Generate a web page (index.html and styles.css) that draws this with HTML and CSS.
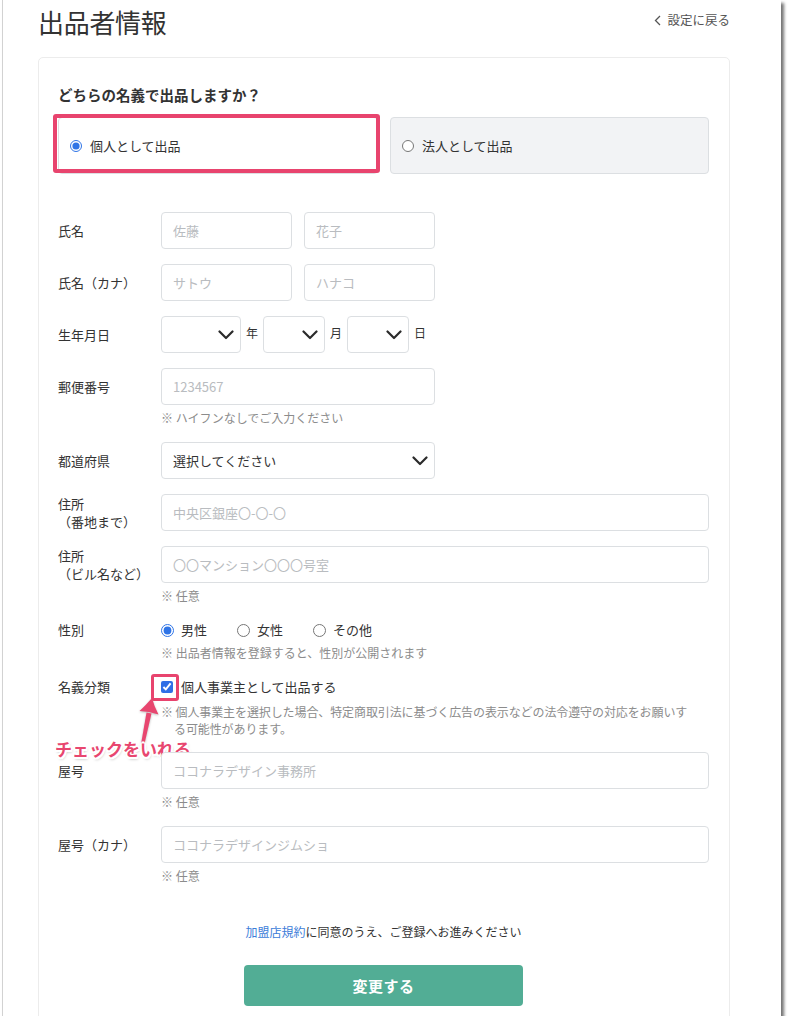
FILE: index.html
```html
<!DOCTYPE html>
<html lang="ja">
<head>
<meta charset="utf-8">
<title>出品者情報</title>
<link rel="stylesheet" href="styles.css">
</head>
<body>
<div class="frame">
  <header class="top">
    <h1 class="title">出品者情報</h1>
    <a class="back" href="#"><svg class="back-ico" width="7" height="11" viewBox="0 0 7 11"><polyline points="6,1 1.5,5.5 6,10" fill="none" stroke="#555" stroke-width="1.3"/></svg>設定に戻る</a>
  </header>

  <section class="card">
    <h2 class="q">どちらの名義で出品しますか？</h2>
    <div class="options">
      <label class="opt opt-on"><input type="radio" name="type" checked>個人として出品<span class="hl hl-opt"></span></label>
      <label class="opt opt-off"><input type="radio" name="type">法人として出品</label>
    </div>

    <div class="form">
      <div class="row">
        <div class="lbl">氏名</div>
        <div class="fld pair">
          <input class="inp w131" placeholder="佐藤">
          <input class="inp w131" placeholder="花子">
        </div>
      </div>

      <div class="row">
        <div class="lbl">氏名（カナ）</div>
        <div class="fld pair">
          <input class="inp w131" placeholder="サトウ">
          <input class="inp w131" placeholder="ハナコ">
        </div>
      </div>

      <div class="row">
        <div class="lbl">生年月日</div>
        <div class="fld date">
          <div class="sel w80"><span></span><svg class="chev" width="16" height="10" viewBox="0 0 16 10"><polyline points="1.5,1.5 8,8 14.5,1.5" fill="none" stroke="#2b2b2b" stroke-width="2.2" stroke-linecap="round" stroke-linejoin="round"/></svg></div>
          <span class="unit">年</span>
          <div class="sel w62"><span></span><svg class="chev" width="16" height="10" viewBox="0 0 16 10"><polyline points="1.5,1.5 8,8 14.5,1.5" fill="none" stroke="#2b2b2b" stroke-width="2.2" stroke-linecap="round" stroke-linejoin="round"/></svg></div>
          <span class="unit">月</span>
          <div class="sel w62"><span></span><svg class="chev" width="16" height="10" viewBox="0 0 16 10"><polyline points="1.5,1.5 8,8 14.5,1.5" fill="none" stroke="#2b2b2b" stroke-width="2.2" stroke-linecap="round" stroke-linejoin="round"/></svg></div>
          <span class="unit">日</span>
        </div>
      </div>

      <div class="row">
        <div class="lbl">郵便番号</div>
        <div class="fld"><input class="inp w274" placeholder="1234567"></div>
        <p class="hint">※ ハイフンなしでご入力ください</p>
      </div>

      <div class="row">
        <div class="lbl">都道府県</div>
        <div class="fld">
          <div class="sel w274"><span class="sel-text">選択してください</span><svg class="chev" width="16" height="10" viewBox="0 0 16 10"><polyline points="1.5,1.5 8,8 14.5,1.5" fill="none" stroke="#2b2b2b" stroke-width="2.2" stroke-linecap="round" stroke-linejoin="round"/></svg></div>
        </div>
      </div>

      <div class="row">
        <div class="lbl">住所<br>（番地まで）</div>
        <div class="fld"><input class="inp wfull" placeholder="中央区銀座〇-〇-〇"></div>
      </div>

      <div class="row">
        <div class="lbl">住所<br>（ビル名など）</div>
        <div class="fld"><input class="inp wfull" placeholder="〇〇マンション〇〇〇号室"></div>
        <p class="hint">※ 任意</p>
      </div>

      <div class="row">
        <div class="lbl">性別</div>
        <div class="fld radios">
          <label class="r"><input type="radio" name="sex" checked>男性</label>
          <label class="r"><input type="radio" name="sex">女性</label>
          <label class="r"><input type="radio" name="sex">その他</label>
        </div>
        <p class="hint">※ 出品者情報を登録すると、性別が公開されます</p>
      </div>

      <div class="row row-kind">
        <div class="lbl">名義分類</div>
        <div class="fld checks">
          <label class="c"><input type="checkbox" checked>個人事業主として出品する</label>
        </div>
        <p class="hint hint-hang">※ 個人事業主を選択した場合、特定商取引法に基づく広告の表示などの法令遵守の対応をお願いす<br>る可能性があります。</p>

        <span class="hl hl-check"></span>
        <svg class="arrow" width="36" height="54" viewBox="0 0 36 54">
          <path d="M10.5 52 L16.5 17.5 L21.5 18.5 L13.5 53 Z" fill="#e8466f"/>
          <path d="M22 3 Q24 11 28.5 19.5 Q19 16 9.5 16 Q16 10 22 3 Z" fill="#e8466f"/>
        </svg>
        <span class="note">チェックをいれる</span>
      </div>

      <div class="row">
        <div class="lbl">屋号</div>
        <div class="fld"><input class="inp wfull" placeholder="ココナラデザイン事務所"></div>
        <p class="hint">※ 任意</p>
      </div>

      <div class="row">
        <div class="lbl">屋号（カナ）</div>
        <div class="fld"><input class="inp wfull" placeholder="ココナラデザインジムショ"></div>
        <p class="hint">※ 任意</p>
      </div>
    </div>

    <p class="terms"><a class="link" href="#">加盟店規約</a>に同意のうえ、ご登録へお進みください</p>
    <button class="submit" type="button">変更する</button>
  </section>
</div>
</body>
</html>
```

FILE: styles.css
```css
* { box-sizing: border-box; }

html, body {
  margin: 0;
  padding: 0;
  background: #ffffff;
}

body {
  font-family: "Noto Sans CJK JP", "Noto Sans", sans-serif;
  color: #333333;
}

.frame {
  margin-left: 2px;
  width: 779px;
  height: 1016px;
  overflow: hidden;
  background: #ffffff;
  border-left: 1px solid #d2d2d2;
  padding: 0 51px 0 35px;
  box-shadow: 3px 3px 3px rgba(0, 0, 0, 0.55);
}

.top {
  display: flex;
  justify-content: space-between;
  align-items: center;
  height: 44px;
}

.title {
  margin: 0;
  font-size: 26px;
  line-height: 44px;
  font-weight: 400;
  color: #333333;
  letter-spacing: -0.3px;
}

.back {
  display: flex;
  align-items: center;
  gap: 6px;
  font-size: 12.5px;
  line-height: 18px;
  color: #555555;
  text-decoration: none;
  margin-top: -4px;
}

.card {
  margin-top: 13px;
  border: 1px solid #ececec;
  border-radius: 5px;
  padding: 27px 20px 60px 19px;
}

.q {
  margin: 0;
  font-size: 14.5px;
  line-height: 20px;
  font-weight: 700;
  color: #333333;
}

.options {
  display: grid;
  grid-template-columns: 320px 319px;
  column-gap: 12px;
  margin-top: 12px;
}

.opt {
  position: relative;
  display: flex;
  align-items: center;
  height: 57px;
  padding-left: 11px;
  border: 1px solid #dcdfe2;
  border-radius: 4px;
  font-size: 13px;
  line-height: 18px;
  color: #333333;
}

.opt input {
  margin: 0 8px 0 0;
  width: 12px;
  height: 12px;
  accent-color: #2f74e6;
}

.opt-on { background: #ffffff; }
.opt-off { background: #f2f3f5; }

.hl {
  position: absolute;
  border: 4px solid #e8446e;
  border-radius: 3px;
  pointer-events: none;
}

.hl-opt {
  left: -6px;
  top: -4px;
  right: -3px;
  bottom: 0;
}

.form {
  margin-top: 38px;
}

.row {
  position: relative;
  display: grid;
  grid-template-columns: 103px 1fr;
  margin-bottom: 15px;
}

.lbl {
  grid-row: 1;
  grid-column: 1;
  align-self: center;
  font-size: 13px;
  line-height: 18px;
  color: #333333;
}

.fld {
  grid-row: 1;
  grid-column: 2;
}

.pair {
  display: flex;
  gap: 12px;
}

.inp {
  height: 37px;
  border: 1px solid #dcdfe2;
  border-radius: 4px;
  padding: 0 11px;
  font-family: inherit;
  font-size: 13px;
  color: #333333;
  background: #ffffff;
  outline: none;
}

.inp::placeholder { color: #b9bcc0; }

.w131 { width: 131px; }
.w274 { width: 274px; }
.w80 { width: 80px; }
.w62 { width: 62px; }
.wfull { width: 100%; }

.date {
  display: flex;
  align-items: center;
}

.unit {
  margin: -4px 5px 0;
  font-size: 12px;
  line-height: 16px;
  color: #333333;
}

.sel {
  display: flex;
  align-items: center;
  justify-content: space-between;
  height: 37px;
  border: 1px solid #dcdfe2;
  border-radius: 4px;
  padding: 0 6px 0 11px;
  background: #ffffff;
}

.sel-text {
  font-size: 13px;
  line-height: 18px;
  color: #333333;
}

.chev { display: block; flex: none; }

.hint {
  grid-column: 2;
  margin: 4px 0 0;
  font-size: 12px;
  line-height: 18px;
  color: #8c8c8c;
}

.hint-hang {
  padding-left: 13px;
  text-indent: -13px;
  line-height: 17px;
  margin-top: 6px;
  letter-spacing: -0.1px;
  white-space: nowrap;
}

.radios {
  display: flex;
  align-items: center;
  height: 20px;
}

.r {
  display: flex;
  align-items: center;
  gap: 7px;
  margin-right: 30px;
  font-size: 13px;
  line-height: 18px;
  color: #333333;
}

.r input {
  margin: 0;
  width: 13px;
  height: 13px;
  accent-color: #2f74e6;
}

.checks {
  display: flex;
  align-items: center;
  height: 20px;
}

.c {
  display: flex;
  align-items: center;
  gap: 8px;
  font-size: 13px;
  line-height: 18px;
  color: #333333;
}

.c input {
  margin: 0;
  width: 12px;
  height: 12px;
  accent-color: #2f6fe6;
}

.hl-check {
  left: 93px;
  top: -3px;
  width: 28px;
  height: 27px;
  border-width: 3.5px;
}

.arrow {
  position: absolute;
  left: 72px;
  top: 18px;
  filter: drop-shadow(0 1px 1px rgba(0, 0, 0, 0.25));
}

.note {
  position: absolute;
  left: -3px;
  top: 61px;
  font-size: 17px;
  line-height: 22px;
  font-weight: 700;
  color: #e8466f;
  white-space: nowrap;
  text-shadow:
    -1.5px -1.5px 0 #fff, 1.5px -1.5px 0 #fff, -1.5px 1.5px 0 #fff, 1.5px 1.5px 0 #fff,
    0 -2px 0 #fff, 0 2px 0 #fff, -2px 0 0 #fff, 2px 0 0 #fff,
    1px 2px 3px rgba(0, 0, 0, 0.35);
}

.terms {
  margin: 37px 0 0;
  text-align: center;
  font-size: 12px;
  line-height: 20px;
  color: #333333;
}

.link {
  color: #3c7dd9;
  text-decoration: none;
}

.submit {
  display: block;
  margin: 23px auto 0;
  width: 279px;
  height: 41px;
  border: none;
  border-radius: 4px;
  background: #52ad95;
  color: #ffffff;
  font-family: inherit;
  font-size: 15px;
  font-weight: 700;
  letter-spacing: 0.5px;
}
```
